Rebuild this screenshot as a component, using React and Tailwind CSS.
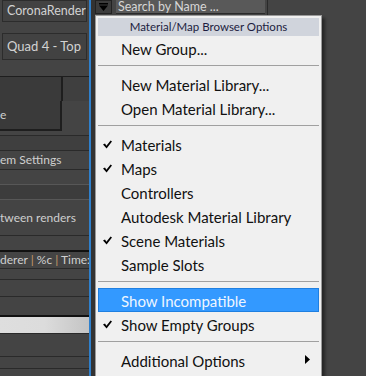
import React from 'react';

const menuFont = { fontFamily: 'Lato, "Noto Sans", sans-serif' };

function Check() {
  return (
    <svg className="w-[9px] h-[9px]" viewBox="0 0 9 9" fill="#000">
      <path d="M0 4.5 L2 3.5 L3.4 5.8 L7.6 0.5 L9 1.5 L3.6 8.6 Z" />
    </svg>
  );
}

function Item({ label, checked, active, arrow }) {
  return (
    <div
      className={`relative h-[24px] flex items-center pl-[23px] pt-[2px] text-[15px] ${
        active ? 'bg-[#3399ff] outline outline-1 -outline-offset-1 outline-[#1f7fe0] text-[#eef6ff]' : 'text-[#111]'
      }`}
    >
      {checked && (
        <span className="absolute left-[5px] top-[8px]">
          <Check />
        </span>
      )}
      <span>{label}</span>
      {arrow && (
        <svg className="absolute right-[9px] top-[7px] w-[5px] h-[9px]" viewBox="0 0 5 9" fill="#000">
          <path d="M0 0 L5 4.5 L0 9 Z" />
        </svg>
      )}
    </div>
  );
}

function Sep() {
  return <div className="h-px bg-[#a0a0a0] mt-[5px] mb-[6px]" />;
}

function Row({ h, className = '', children }) {
  return (
    <div className={`border-b border-[#2a2a2a] flex items-center ${className}`} style={{ height: h }}>
      {children}
    </div>
  );
}

export default function App() {
  const panelText = 'text-[#cfcfcf] text-[12px] whitespace-nowrap';
  return (
    <div className="relative w-[366px] h-[376px] overflow-hidden bg-[#444444]" style={{ fontFamily: 'Lato, "Noto Sans", sans-serif' }}>
      <div className="flex h-full">
        {/* left panel */}
        <div className="w-[89px] h-full flex flex-col overflow-hidden">
          <div className="h-[22px] mx-[2px] border border-[#2c2c2c] bg-[#424242] flex items-center pl-[4px] overflow-hidden">
            <span className="text-[#d2d2d2] text-[12.5px] whitespace-nowrap">CoronaRender</span>
          </div>
          <div className="h-[11px]" />
          <div className="h-[27px] mx-[2px] border border-[#2c2c2c] bg-[#424242] flex items-center pl-[4px]">
            <span className="text-[#d2d2d2] text-[13px] whitespace-nowrap">Quad 4 - Top</span>
          </div>
          <div className="h-[16px]" />
          <div className="h-[25px] flex border-t border-[#1e1e1e]">
            <div className="w-[63px] bg-[#3a3a3a] border-r-2 border-[#1e1e1e]" />
            <div className="flex-1 bg-[#3f3f3f]" />
          </div>
          <div className="h-[30px] flex">
            <div className="w-[62px] bg-[#3a3a3a] border-r-2 border-b-2 border-[#1e1e1e] flex items-center">
              <span className={panelText}>e</span>
            </div>
            <div className="flex-1" />
          </div>
          <div className="h-[5px] border-b border-[#2a2a2a]" />
          <Row h={15} className="bg-[#3f3f3f]" />
          <Row h={19}>
            <span className={panelText}>em Settings</span>
          </Row>
          <Row h={15} className="border-[#575757]" />
          <Row h={15} className="bg-[#3c3c3c] border-[#575757]" />
          <Row h={36}>
            <span className={panelText}>tween renders</span>
          </Row>
          <Row h={16} className="border-b-2 border-[#111]" />
          <Row h={17}>
            <span className={panelText}>
              derer <span className="text-[#c79a68]">|</span> %c <span className="text-[#c79a68]">|</span> Time:
            </span>
          </Row>
          <Row h={11} />
          <Row h={17} />
          <Row h={20} className="border-b-2 border-[#111]" />
          <Row h={17} className="bg-gradient-to-r from-[#dedede] via-[#dcdcdc] to-[#c4c4c4]" />
          <Row h={23} />
          <Row h={12} />
          <div className="flex-1" />
        </div>
        <div className="w-[2px] h-full bg-[#2f80cc]" />
        <div className="w-[4px] h-full bg-[#333333]" />
        {/* right side toolbar */}
        <div className="flex-1 h-full">
          <div className="flex items-start h-[15px]">
            <div className="w-[17px] h-[14px] bg-[#3c3c3c] border border-[#222] flex items-center justify-center">
              <svg className="w-[9px] h-[8px]" viewBox="0 0 9 8" fill="#000">
                <path d="M0 0 H9 V1.5 H0 Z M0 2.5 H9 L4.5 8 Z" />
              </svg>
            </div>
            <div className="w-[149px] h-[14px] ml-[4px] bg-[#595959] border-b border-[#2a2a2a] flex items-center pl-[2px]">
              <span className="text-[#d6d6d6] text-[12.5px] leading-[14px] whitespace-nowrap">Search by Name ...</span>
            </div>
            <div className="w-px h-[15px] bg-[#2a2a2a] ml-[2px]" />
          </div>
        </div>
      </div>

      {/* popup menu */}
      <div
        className="absolute left-[95px] top-[15px] w-[227px] h-[372px] border border-[#9a9a9a] bg-[#f0f0f0] p-[2px] shadow-[3px_3px_3px_rgba(0,0,0,0.45)]"
        style={menuFont}
      >
        <div className="h-[18px] bg-[#d0d4dc] flex items-center justify-center text-[11.5px] text-[#1c1c40]">
          Material/Map Browser Options
        </div>
        <Item label="New Group..." />
        <Sep />
        <Item label="New Material Library..." />
        <Item label="Open Material Library..." />
        <Sep />
        <Item label="Materials" checked />
        <Item label="Maps" checked />
        <Item label="Controllers" />
        <Item label="Autodesk Material Library" />
        <Item label="Scene Materials" checked />
        <Item label="Sample Slots" />
        <Sep />
        <Item label="Show Incompatible" active />
        <Item label="Show Empty Groups" checked />
        <Sep />
        <Item label="Additional Options" arrow />
      </div>
    </div>
  );
}
